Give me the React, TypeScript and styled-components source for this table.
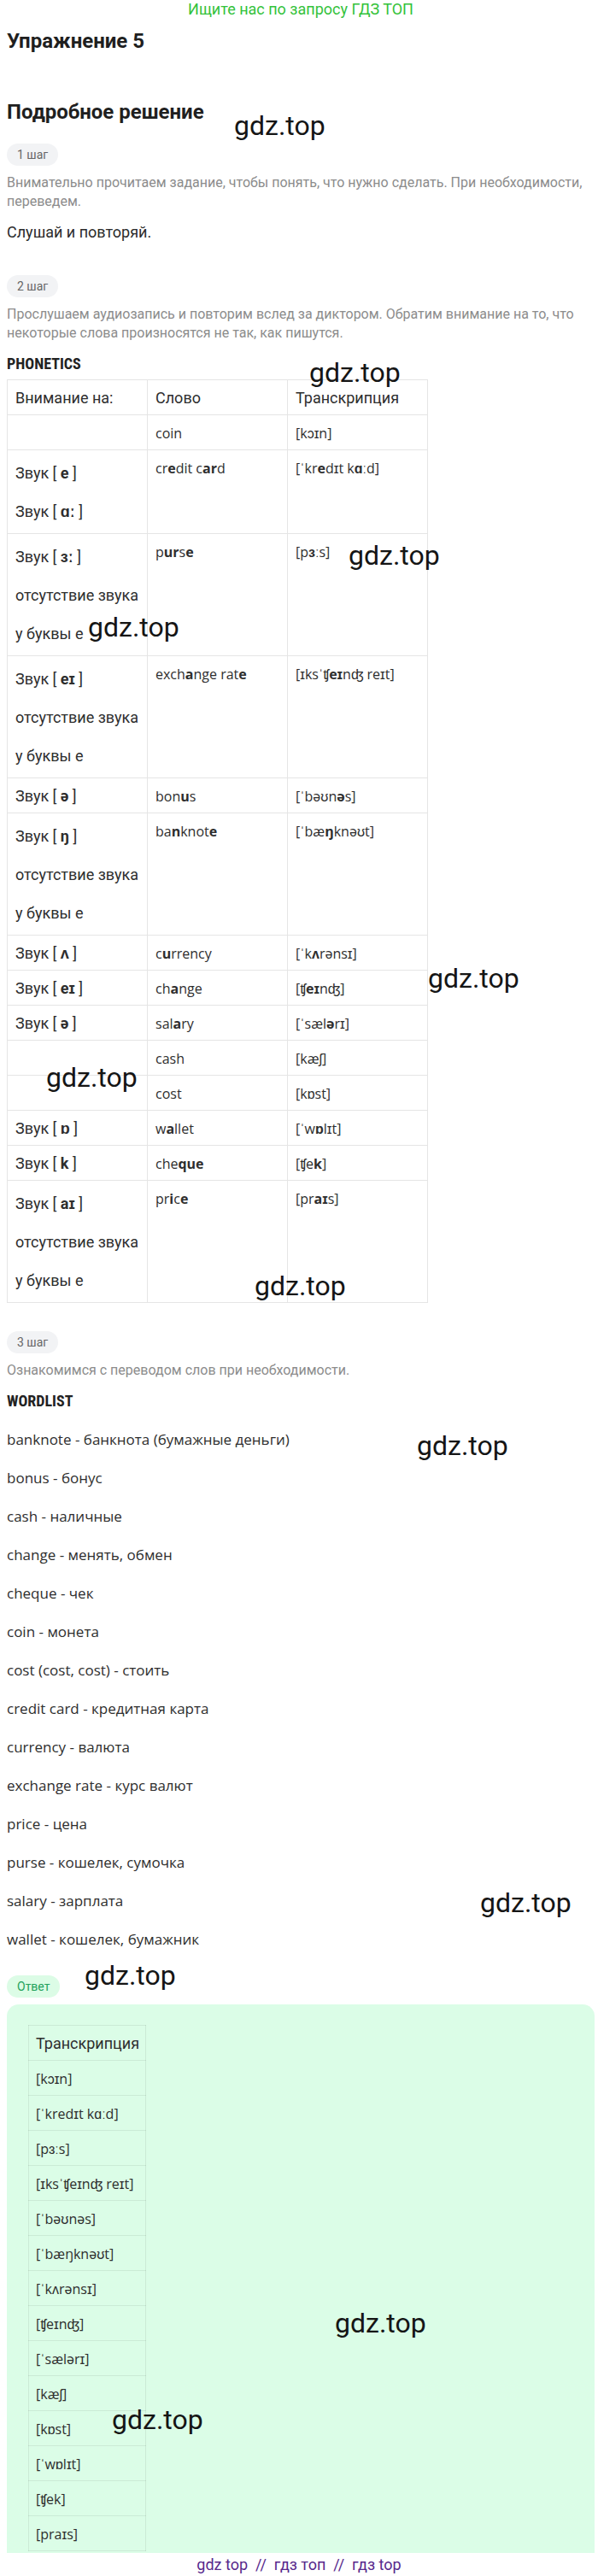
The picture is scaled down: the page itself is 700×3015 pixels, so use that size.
import React from "react";
import styled, { createGlobalStyle } from "styled-components";

const GlobalStyle = createGlobalStyle`
  html, body { margin: 0; padding: 0; background: #fff; }
  body { font-family: Roboto, "Liberation Sans", sans-serif; color: #2b2b2b; }
`;

const Page = styled.div`
  position: relative;
  padding: 0 4px 40px 8px;
`;

const Banner = styled.div`
  height: 22px;
  line-height: 22px;
  font-size: 18px;
  color: #34c23b;
  text-align: center;
`;

const Title = styled.h1`
  margin: 11px 0 0;
  font-size: 24px;
  line-height: 30px;
  font-weight: 700;
  color: #1f1f1f;
`;

const Subtitle = styled.h2`
  margin: 54px 0 0;
  font-size: 24px;
  line-height: 28px;
  font-weight: 700;
  color: #1f1f1f;
`;

const Badge = styled.div<{ $mt: number; $answer?: boolean }>`
  margin-top: ${(p) => p.$mt}px;
  width: fit-content;
  height: 26px;
  line-height: 26px;
  padding: 0 12px;
  border-radius: 13px;
  font-size: 14px;
  background: ${(p) => (p.$answer ? "#dcfce6" : "#f2f3f5")};
  color: ${(p) => (p.$answer ? "#23a25c" : "#666")};
`;

const Note = styled.p`
  margin: 9px 0 0;
  font-size: 16px;
  line-height: 22px;
  color: #8c8c8c;
`;

const Lead = styled.p`
  margin: 14px 0 0;
  font-size: 18px;
  line-height: 22px;
  color: #2b2b2b;
`;

const SectionTitle = styled.h3`
  margin: 14px 0 0;
  font-family: "Liberation Sans Narrow", "Roboto Condensed", Roboto, sans-serif;
  font-size: 18px;
  line-height: 22px;
  font-weight: 700;
  color: #222;
`;

const Table = styled.table`
  margin-top: 7px;
  width: 493px;
  border-collapse: collapse;
  table-layout: fixed;
`;

const Cell = styled.td<{ $word?: boolean; $stacked?: boolean }>`
  border: 1px solid #e5e5e5;
  vertical-align: top;
  text-align: left;
  padding: ${(p) => (p.$stacked ? "4px 9px 3px" : "9px 9px 7px")};
  line-height: 24px;
  white-space: nowrap;
  font-weight: 400;
  font-family: ${(p) => (p.$word ? '"Open Sans", sans-serif' : "Roboto, sans-serif")};
  font-size: ${(p) => (p.$word ? "16px" : "18px")};
  color: #2e2e2e;
  b { font-weight: 700; }
`;

const SoundLine = styled.div`
  line-height: 45px;
`;

const WordList = styled.div`
  margin-top: 22px;
  display: flex;
  flex-direction: column;
  gap: 21px;
`;

const WordItem = styled.div`
  font-family: "Open Sans", sans-serif;
  font-size: 17px;
  line-height: 24px;
  color: #2e2e2e;
`;

const AnswerBox = styled.div`
  margin-top: 8px;
  background: #dbfde7;
  border-radius: 14px;
  padding: 24px 25px 30px;
`;

const AnswerTable = styled.table`
  border-collapse: collapse;
`;

const AnswerCell = styled(Cell)`
  border-color: rgba(0, 0, 0, 0.07);
  padding-left: 8px;
  padding-right: 7px;
`;

const Watermark = styled.span<{ $x: number; $y: number }>`
  position: absolute;
  left: ${(p) => p.$x}px;
  top: ${(p) => p.$y}px;
  font-family: Roboto, "Liberation Sans", sans-serif;
  font-size: 32px;
  line-height: 32px;
  color: #151515;
  pointer-events: none;
`;

const Footer = styled.div`
  position: fixed;
  left: 0;
  right: 0;
  bottom: 0;
  height: 27px;
  line-height: 27px;
  background: #fff;
  text-align: center;
  font-size: 18px;
  color: #57288c;
  white-space: pre;
`;

// "*x*" marks bold parts
function rich(s: string) {
  return s.split("*").map((chunk, i) => (i % 2 ? <b key={i}>{chunk}</b> : <React.Fragment key={i}>{chunk}</React.Fragment>));
}

const SILENT = ["отсутствие звука", "у буквы е"];

const rows: { sound: string[]; word: string; trans: string }[] = [
  { sound: [], word: "coin", trans: "[kɔɪn]" },
  { sound: ["Звук [ *e* ]", "Звук [ *ɑː* ]"], word: "cr*e*dit c*ar*d", trans: "[ˈkr*e*dɪt k*ɑ*ːd]" },
  { sound: ["Звук [ *ɜː* ]", ...SILENT], word: "p*ur*s*e*", trans: "[p*ɜ*ːs]" },
  { sound: ["Звук [ *eɪ* ]", ...SILENT], word: "exch*a*nge rat*e*", trans: "[ɪksˈʧ*eɪ*nʤ reɪt]" },
  { sound: ["Звук [ *ə* ]"], word: "bon*u*s", trans: "[ˈbəʊn*ə*s]" },
  { sound: ["Звук [ *ŋ* ]", ...SILENT], word: "ba*n*knot*e*", trans: "[ˈbæ*ŋ*knəʊt]" },
  { sound: ["Звук [ *ʌ* ]"], word: "c*u*rrency", trans: "[ˈk*ʌ*rənsɪ]" },
  { sound: ["Звук [ *eɪ* ]"], word: "ch*a*nge", trans: "[ʧ*eɪ*nʤ]" },
  { sound: ["Звук [ *ə* ]"], word: "sal*a*ry", trans: "[ˈsæl*ə*rɪ]" },
  { sound: [], word: "cash", trans: "[kæʃ]" },
  { sound: [], word: "cost", trans: "[kɒst]" },
  { sound: ["Звук [ *ɒ* ]"], word: "w*a*llet", trans: "[ˈw*ɒ*lɪt]" },
  { sound: ["Звук [ *k* ]"], word: "che*que*", trans: "[ʧe*k*]" },
  { sound: ["Звук [ *aɪ* ]", ...SILENT], word: "pr*i*c*e*", trans: "[pr*aɪ*s]" },
];

const words = [
  "banknote - банкнота (бумажные деньги)",
  "bonus - бонус",
  "cash - наличные",
  "change - менять, обмен",
  "cheque - чек",
  "coin - монета",
  "cost (cost, cost) - стоить",
  "credit card - кредитная карта",
  "currency - валюта",
  "exchange rate - курс валют",
  "price - цена",
  "purse - кошелек, сумочка",
  "salary - зарплата",
  "wallet - кошелек, бумажник",
];

const answer = [
  "[kɔɪn]",
  "[ˈkredɪt kɑːd]",
  "[pɜːs]",
  "[ɪksˈʧeɪnʤ reɪt]",
  "[ˈbəʊnəs]",
  "[ˈbæŋknəʊt]",
  "[ˈkʌrənsɪ]",
  "[ʧeɪnʤ]",
  "[ˈsælərɪ]",
  "[kæʃ]",
  "[kɒst]",
  "[ˈwɒlɪt]",
  "[ʧek]",
  "[praɪs]",
];

const marks: [number, number][] = [
  [274, 131], [362, 420], [408, 634], [103, 718], [501, 1129], [54, 1245],
  [298, 1489], [488, 1676], [562, 2211], [99, 2296], [392, 2703], [131, 2816],
];

export default function App() {
  return (
    <Page>
      <GlobalStyle />
      <Banner>Ищите нас по запросу ГДЗ ТОП</Banner>
      <Title>Упражнение 5</Title>
      <Subtitle>Подробное решение</Subtitle>

      <Badge $mt={23}>1 шаг</Badge>
      <Note>Внимательно прочитаем задание, чтобы понять, что нужно сделать. При необходимости, переведем.</Note>
      <Lead>Слушай и повторяй.</Lead>

      <Badge $mt={39}>2 шаг</Badge>
      <Note>Прослушаем аудиозапись и повторим вслед за диктором. Обратим внимание на то, что некоторые слова произносятся не так, как пишутся.</Note>
      <SectionTitle>PHONETICS</SectionTitle>
      <Table>
        <thead>
          <tr>
            <Cell as="th">Внимание на:</Cell>
            <Cell as="th">Слово</Cell>
            <Cell as="th">Транскрипция</Cell>
          </tr>
        </thead>
        <tbody>
          {rows.map((r) => (
            <tr key={r.word}>
              <Cell $stacked={r.sound.length > 1}>
                {r.sound.length > 1
                  ? r.sound.map((l) => <SoundLine key={l}>{rich(l)}</SoundLine>)
                  : r.sound.map((l) => rich(l))}
              </Cell>
              <Cell $word>{rich(r.word)}</Cell>
              <Cell $word>{rich(r.trans)}</Cell>
            </tr>
          ))}
        </tbody>
      </Table>

      <Badge $mt={33}>3 шаг</Badge>
      <Note>Ознакомимся с переводом слов при необходимости.</Note>
      <SectionTitle>WORDLIST</SectionTitle>
      <WordList>
        {words.map((w) => (
          <WordItem key={w}>{w}</WordItem>
        ))}
      </WordList>

      <Badge $mt={30} $answer>
        Ответ
      </Badge>
      <AnswerBox>
        <AnswerTable>
          <thead>
            <tr>
              <AnswerCell as="th">Транскрипция</AnswerCell>
            </tr>
          </thead>
          <tbody>
            {answer.map((a) => (
              <tr key={a}>
                <AnswerCell $word>{a}</AnswerCell>
              </tr>
            ))}
          </tbody>
        </AnswerTable>
      </AnswerBox>

      {marks.map(([x, y]) => (
        <Watermark key={`${x}-${y}`} $x={x} $y={y}>
          gdz.top
        </Watermark>
      ))}

      <Footer>{"gdz top  //  гдз топ  //  гдз top"}</Footer>
    </Page>
  );
}
